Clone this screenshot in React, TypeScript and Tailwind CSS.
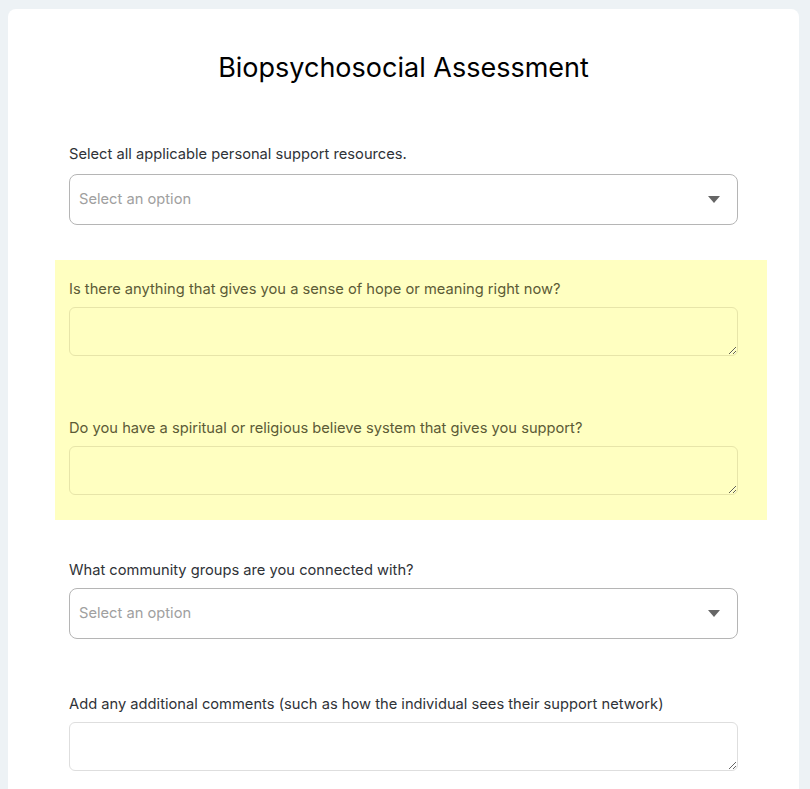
import React from "react";

function Caret() {
  return (
    <svg width="12" height="7" viewBox="0 0 12 7" className="shrink-0">
      <path d="M0 0h12L6 7z" fill="#666666" />
    </svg>
  );
}

function SelectField({ label, gap }: { label: string; gap: string }) {
  return (
    <div>
      <label className={`block text-[14.7px] leading-5 text-[#2f3237] ${gap}`}>{label}</label>
      <div className="flex h-[51px] items-center justify-between rounded-lg border border-[#b5b5b5] bg-white pl-[9px] pr-[17px]">
        <span className="text-[14.7px] text-[#a0a0a0]">Select an option</span>
        <Caret />
      </div>
    </div>
  );
}

function TextField({ label, tinted }: { label: string; tinted?: boolean }) {
  return (
    <div>
      <label
        className={`mb-2 block text-[14.7px] leading-5 ${tinted ? "text-[#5c5b36]" : "text-[#2f3237]"}`}
      >
        {label}
      </label>
      <textarea
        rows={2}
        className={`block h-[49px] w-full rounded-md border px-3 py-2 text-[15px] outline-none ${
          tinted ? "border-[#e7e5a9] bg-transparent" : "border-[#dedede] bg-white"
        }`}
      />
    </div>
  );
}

export default function App() {
  return (
    <div
      className="min-h-[789px] bg-[#edf2f5] pl-2 pr-[11px] pt-[9px]"
      style={{ fontFamily: "Inter, 'Noto Sans', sans-serif" }}
    >
      <div className="h-[780px] overflow-hidden rounded-t-lg bg-white px-[61px]">
        <h1 className="pt-[42px] text-center text-[27px] leading-[34px] text-black">
          Biopsychosocial Assessment
        </h1>

        <div className="mt-[59px]">
          <SelectField gap="mb-[10px]" label="Select all applicable personal support resources." />
        </div>

        <div className="-ml-[14px] -mr-[29px] mt-[35px] bg-[#ffffc1] pb-[25px] pl-[14px] pr-[29px] pt-[19px]">
          <TextField tinted label="Is there anything that gives you a sense of hope or meaning right now?" />
          <div className="mt-[62px]">
            <TextField tinted label="Do you have a spiritual or religious believe system that gives you support?" />
          </div>
        </div>

        <div className="mt-[40px]">
          <SelectField gap="mb-2" label="What community groups are you connected with?" />
        </div>

        <div className="mt-[55px]">
          <TextField label="Add any additional comments (such as how the individual sees their support network)" />
        </div>
      </div>
    </div>
  );
}
